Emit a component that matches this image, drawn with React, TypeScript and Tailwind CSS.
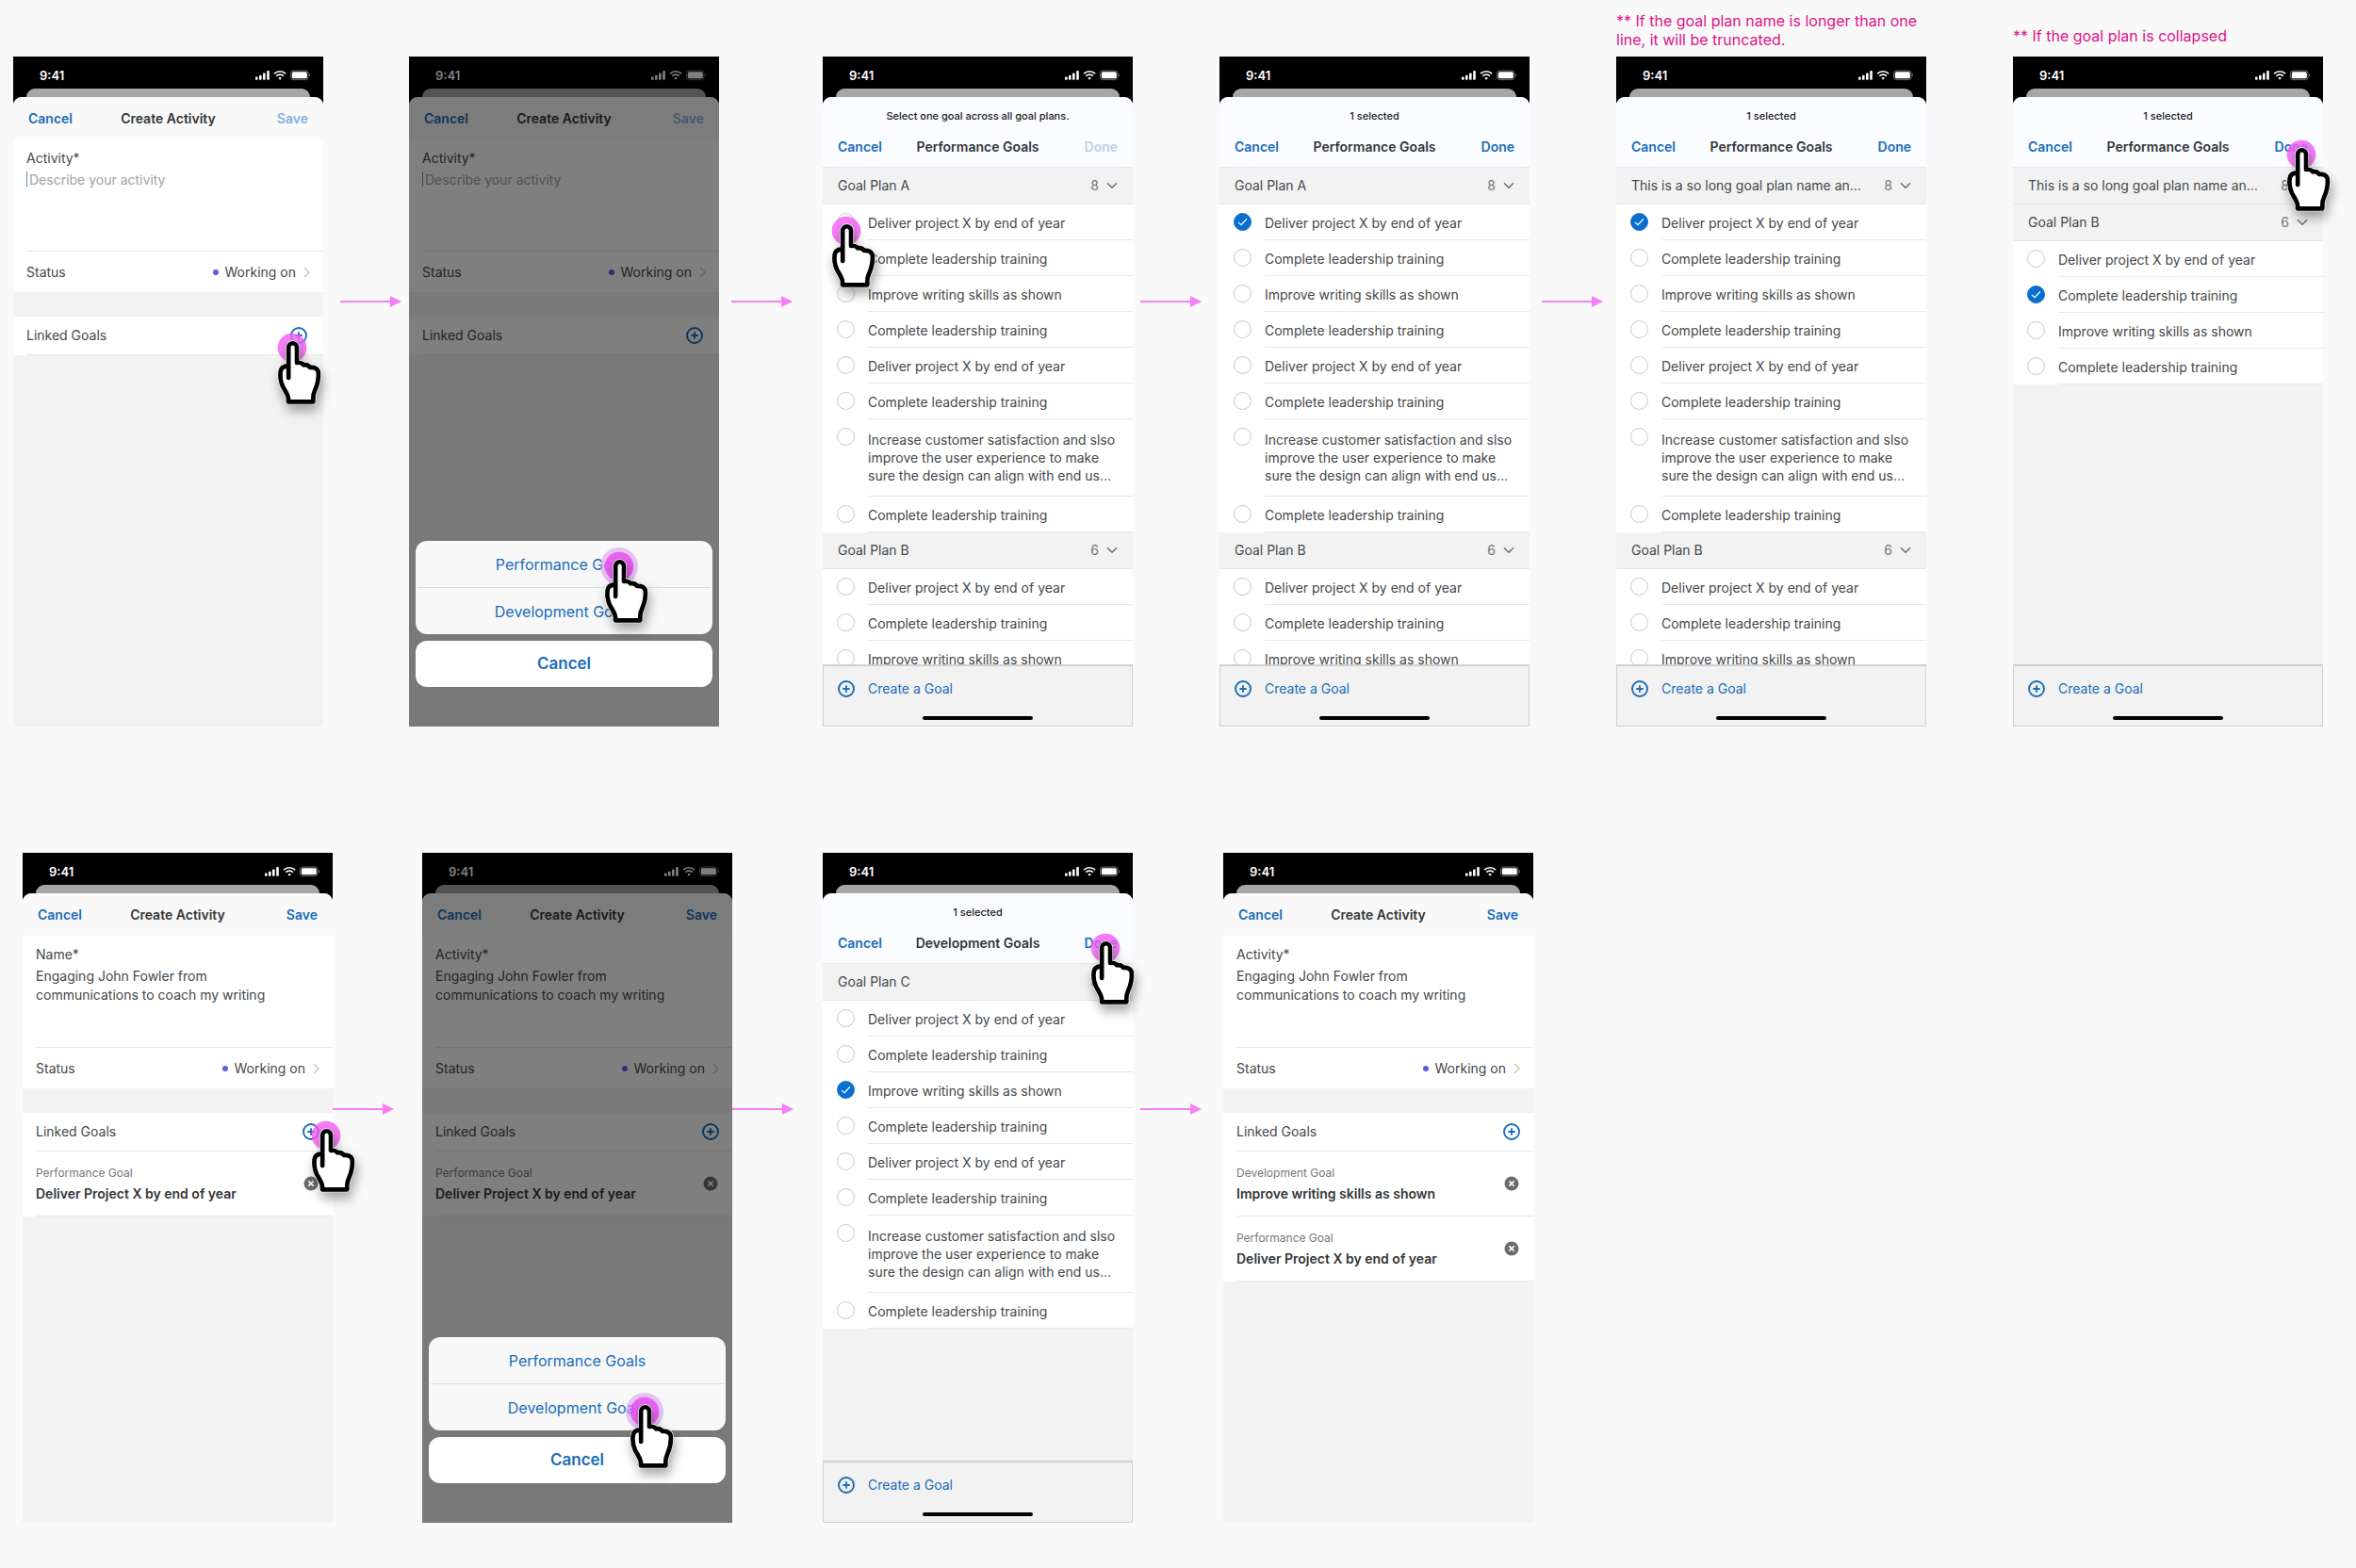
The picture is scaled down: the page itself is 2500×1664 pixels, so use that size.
import React from 'react';
import clsx from 'clsx';

const PLAN_A = [
  'Deliver project X by end of year',
  'Complete leadership training',
  'Improve writing skills as shown',
  'Complete leadership training',
  'Deliver project X by end of year',
  'Complete leadership training',
  'Increase customer satisfaction and slso improve the user experience to make sure the design can align with end us…',
  'Complete leadership training',
];
const PLAN_B = PLAN_A.slice(0, 4);
const LONG_NAME = 'This is a so long goal plan name an…';
const ACTIVITY = 'Engaging John Fowler from\ncommunications to coach my writing';

function PlusIcon() {
  return (
    <svg viewBox="0 0 18 18" className="size-[18px] shrink-0" fill="none" stroke="#1a6cb8">
      <circle cx="9" cy="9" r="8" strokeWidth="1.9" />
      <path d="M9 5.3v7.4M5.3 9h7.4" strokeWidth="1.8" />
    </svg>
  );
}

function RemoveIcon() {
  return (
    <svg viewBox="0 0 16 16" className="size-4">
      <circle cx="8" cy="8" r="7.5" fill="#6a6d70" />
      <path d="M5.4 5.4l5.2 5.2M10.6 5.4l-5.2 5.2" stroke="#fff" strokeWidth="1.5" />
    </svg>
  );
}

function StatusBar() {
  return (
    <div>
      <div className="flex h-[34px] items-center justify-between pt-[6px] pr-[14px] pl-[28px] text-white">
        <span className="text-[13px] font-semibold">9:41</span>
        <svg viewBox="0 0 58 12" className="h-3 w-[58px]" fill="#fff">
          <rect x="0" y="7.5" width="2.6" height="3.2" rx=".8" />
          <rect x="4" y="5.8" width="2.6" height="4.9" rx=".8" />
          <rect x="8" y="3.5" width="2.6" height="7.2" rx=".8" />
          <rect x="12.2" y="1" width="2.6" height="9.7" rx=".8" />
          <g fill="none" stroke="#fff" strokeWidth="1.7">
            <path d="M20.1 4.2a8.6 8.6 0 0 1 12 0" />
            <path d="M22.3 6.6a5.4 5.4 0 0 1 7.6 0" />
          </g>
          <path d="M24.3 8.7a2.7 2.7 0 0 1 3.6 0L26.1 10.7z" />
          <rect x="37.5" y="1" width="18.5" height="9.6" rx="2.6" fill="none" stroke="#6b6b6b" />
          <rect x="38.8" y="2.3" width="16" height="7" rx="1.5" />
          <path d="M57 4.3v3a1.6 1.6 0 0 0 0-3z" fill="#6b6b6b" />
        </svg>
      </div>
      <div className="mx-[14px] h-[9px] rounded-t-[9px] bg-[#a6a6a6]" />
    </div>
  );
}

/* tap marker: pink dot under a pointing hand */
function Pointer({ className, halo = false }) {
  const hand =
    'M39.5 123V26a13.3 13.3 0 0 1 26.6 0V75C74 73 84 76 88 82C96 80 104 84 108 90C118 88 133 92 134.5 106C136 130 130 148 124 161C120 170 118 178 118 186V199H39V188C38 177 28 163 21 150C14 134 12 118 14 104C15 92 25 86 36 85';
  return (
    <svg viewBox="0 -30 150 249" className={clsx('pointer-events-none absolute h-[83px] w-[50px] overflow-visible', className)}>
      {halo && <circle cx="51" cy="27" r="60" fill="#d9a0ec" fillOpacity=".6" />}
      <circle cx="51" cy="27" r="46" fill={halo ? '#ea4bf0' : '#f35cf3'} fillOpacity=".8" />
      <g strokeLinejoin="round" strokeLinecap="round" className="drop-shadow-[6px_20px_18px_rgba(0,0,0,0.35)]">
        <path d={hand} fill="#fff" stroke="#fff" strokeWidth="18" />
        <path d={hand} fill="#fff" stroke="#000" strokeWidth="14" />
      </g>
    </svg>
  );
}

function Arrow({ className = '' }) {
  return (
    <svg viewBox="0 0 65 12" className={clsx('h-3 w-[65px] overflow-visible', className)}>
      <path d="M0 6h54" stroke="#f77ff5" strokeWidth="1.8" />
      <path d="M53 0l12 6-12 6z" fill="#f77ff5" />
    </svg>
  );
}

function Phone({ children, overlay = null, pointer = null }) {
  return (
    <div className="relative">
      <div className="relative flex aspect-[329/711] flex-col overflow-hidden bg-black">
        <StatusBar />
        <div className="flex min-h-0 flex-1 flex-col overflow-hidden rounded-t-[9px] bg-[#f2f2f2]">{children}</div>
        {overlay}
      </div>
      {pointer}
    </div>
  );
}

function TitleBar({ title, action, disabled = false }) {
  return (
    <div className="grid grid-cols-[1fr_auto_1fr] items-center px-4 font-semibold">
      <button className="justify-self-start text-[#1a6cb8]">Cancel</button>
      <h2 className="text-[#32363a]">{title}</h2>
      <button
        disabled={disabled}
        className={clsx('justify-self-end text-[#1a6cb8]', action === 'Done' ? 'disabled:text-[#bcd1e8]' : 'disabled:text-[#86b1de]')}
      >
        {action}
      </button>
    </div>
  );
}

function ActivityForm({ id, label = 'Activity*', text = '', goals = [] }) {
  return (
    <>
      <div className="flex h-[45px] flex-col justify-center bg-[#f9f9f9]">
        <TitleBar title="Create Activity" action="Save" disabled={!text} />
      </div>
      <div className="bg-white pl-[14px]">
        <div className="flex h-[119px] flex-col border-b border-[#e8e8e8] pt-[10px]">
          <label htmlFor={id}>{label}</label>
          <div className="flex flex-1 pt-[3px]">
            {!text && <span className="mt-px h-4 w-px bg-[#5b93cc]" />}
            <textarea
              id={id}
              defaultValue={text}
              placeholder="Describe your activity"
              className={clsx('flex-1 resize-none overflow-hidden leading-5 outline-none placeholder:text-[#a0a2a4]', !text && 'pl-[2px]')}
            />
          </div>
        </div>
        <button className="flex h-[43px] w-full items-center pr-[14px]">
          <span>Status</span>
          <span className="mr-[6px] ml-auto size-[6px] rounded-full bg-[#5a5ee6]" />
          <span>Working on</span>
          <svg viewBox="0 0 7 12" className="ml-2 h-3 w-[7px]" fill="none" stroke="#c4c6c8" strokeWidth="1.4">
            <path d="M1 1l5 5-5 5" />
          </svg>
        </button>
      </div>
      <div className="mt-[26px] bg-white pl-[14px]">
        <div className={clsx('flex h-[41px] items-center justify-between border-b border-[#e8e8e8]', goals.length ? 'pr-[14px]' : 'pr-[17px]')}>
          <span>Linked Goals</span>
          <button aria-label="Add goal"><PlusIcon /></button>
        </div>
        {goals.map((g) => (
          <div key={g.name} className="flex h-[69px] items-center justify-between border-b border-[#e8e8e8] pr-[15px]">
            <div className="pt-[2px]">
              <div className="text-xs leading-5 text-[#74777a]">{g.kind}</div>
              <div className="leading-6 font-semibold text-[#32363a]">{g.name}</div>
            </div>
            <button aria-label="Remove goal"><RemoveIcon /></button>
          </div>
        ))}
      </div>
    </>
  );
}

function ActionSheet() {
  return (
    <div className="absolute inset-0 flex flex-col justify-end gap-[7px] bg-black/50 px-[7px] pb-[42px] text-base text-[#1a6cb8]">
      <div className="flex flex-col rounded-xl bg-[#f8f8f8] px-[2px]">
        <button className="h-[50px] border-b border-[#dcdcdc]">Performance Goals</button>
        <button className="h-[49px]">Development Goals</button>
      </div>
      <button className="h-[49px] rounded-xl bg-white text-[17px] font-semibold">Cancel</button>
    </div>
  );
}

function GoalRow({ name, group, checked }) {
  return (
    <label className="flex min-h-[38px] pl-[15px]">
      <span className="mt-[9px] grid size-[19px] shrink-0 place-items-center">
        <input
          type="radio"
          name={group}
          defaultChecked={checked}
          className="peer size-[19px] appearance-none rounded-full border border-[#c8c9cb] bg-white [grid-area:1/1] checked:border-[#0a6ed1] checked:bg-[#0a6ed1]"
        />
        <svg viewBox="0 0 12 10" className="z-10 hidden h-[9px] w-[11px] [grid-area:1/1] peer-checked:block" fill="none" stroke="#fff" strokeWidth="1.3">
          <path d="M1 5.4l3.4 3.2L11 1.4" />
        </svg>
      </span>
      <span className={clsx('ml-[14px] flex-1 border-b border-[#e8e8e8] pr-[14px] leading-[19px]', name.length > 60 ? 'py-3' : 'pt-[10px]')}>
        {name}
      </span>
    </label>
  );
}

function GoalPicker({ id, title = 'Performance Goals', hint = '1 selected', disabled = false, plans }) {
  return (
    <>
      <div className="flex h-[75px] shrink-0 flex-col justify-between border-b border-[#e4e6e9] bg-[#fafcff] pt-3 pb-[11px]">
        <p className="text-center text-[11px] leading-4 font-medium text-[#222]">{hint}</p>
        <TitleBar title={title} action="Done" disabled={disabled} />
      </div>
      <div className="min-h-0 flex-1 overflow-hidden">
        {plans.map((plan) => (
          <div key={plan.name}>
            <button className="flex h-[39px] w-full items-center border-b border-[#e4e6e9] px-4">
              <span className="flex-1 truncate text-left">{plan.name}</span>
              <span className="ml-3 text-[#74777a]">{plan.count}</span>
              <svg viewBox="0 0 12 8" className="ml-2 h-2 w-3" fill="none" stroke="#6a6d70" strokeWidth="1.5">
                <path d="M1 1.3l5 5 5-5" />
              </svg>
            </button>
            <div className="bg-white">
              {plan.goals.map((name, i) => (
                <GoalRow key={i} name={name} group={id} checked={i === plan.selected} />
              ))}
            </div>
          </div>
        ))}
      </div>
      <div className="flex h-[66px] shrink-0 flex-col items-center justify-between border border-t-2 border-[#d0d0d0] pt-[14px] pb-[6px]">
        <button className="flex w-full items-center gap-[14px] pl-[15px] text-[#1a6cb8]">
          <PlusIcon />
          Create a Goal
        </button>
        <span className="h-1 w-[117px] rounded-full bg-black" />
      </div>
    </>
  );
}

function Note({ children = null, className = '' }) {
  return (
    <div className={clsx('flex h-[60px] flex-col justify-end text-base leading-5 text-[#e0128a]', className)}>
      <p>{children}</p>
    </div>
  );
}

export default function App() {
  const planB = { name: 'Goal Plan B', count: 6, goals: PLAN_B };
  const linked = { kind: 'Performance Goal', name: 'Deliver Project X by end of year' };
  return (
    <main className="min-h-screen bg-[#f9f9f9] font-['Inter',sans-serif] text-sm text-[#45484b]">
      <section className="flex pr-[35px] pl-[14px]">
        <div className="min-w-0 flex-[329]">
          <Note />
          <Phone pointer={<Pointer className="top-[290px] left-[279px]" />}>
            <ActivityForm id="a1" />
          </Phone>
        </div>
        <div className="min-w-0 flex-[91] pt-[314px]"><Arrow className="ml-[18px]" /></div>
        <div className="min-w-0 flex-[329]">
          <Note />
          <Phone overlay={<ActionSheet />} pointer={<Pointer halo className="top-[522px] left-[206px]" />}>
            <ActivityForm id="a2" />
          </Phone>
        </div>
        <div className="min-w-0 flex-[110] pt-[314px]"><Arrow className="ml-[13px]" /></div>
        <div className="min-w-0 flex-[329]">
          <Note />
          <Phone pointer={<Pointer className="top-[166px] left-[8px]" />}>
            <GoalPicker id="g1" hint="Select one goal across all goal plans." disabled plans={[{ name: 'Goal Plan A', count: 8, goals: PLAN_A }, planB]} />
          </Phone>
        </div>
        <div className="min-w-0 flex-[92] pt-[314px]"><Arrow className="ml-2" /></div>
        <div className="min-w-0 flex-[329]">
          <Note />
          <Phone>
            <GoalPicker id="g2" plans={[{ name: 'Goal Plan A', count: 8, goals: PLAN_A, selected: 0 }, planB]} />
          </Phone>
        </div>
        <div className="min-w-0 flex-[92] pt-[314px]"><Arrow className="ml-[13px]" /></div>
        <div className="min-w-0 flex-[329]">
          <Note className="pb-2">** If the goal plan name is longer than one line, it will be truncated.</Note>
          <Phone>
            <GoalPicker id="g3" plans={[{ name: LONG_NAME, count: 8, goals: PLAN_A, selected: 0 }, planB]} />
          </Phone>
        </div>
        <div className="min-w-0 flex-[92]" />
        <div className="min-w-0 flex-[329]">
          <Note className="pb-3">** If the goal plan is collapsed</Note>
          <Phone pointer={<Pointer className="top-[85px] left-[289px]" />}>
            <GoalPicker id="g4" plans={[{ name: LONG_NAME, count: 8, goals: [] }, { ...planB, selected: 1 }]} />
          </Phone>
        </div>
      </section>

      <section className="mt-[134px] flex pl-6">
        <div className="min-w-0 flex-[329]">
          <Phone pointer={<Pointer className="top-[281px] left-[305px]" />}>
            <ActivityForm id="a3" label="Name*" text={ACTIVITY} goals={[linked]} />
          </Phone>
        </div>
        <div className="min-w-0 flex-[95] pt-[266px]"><Arrow /></div>
        <div className="min-w-0 flex-[329]">
          <Phone overlay={<ActionSheet />} pointer={<Pointer halo className="top-[574px] left-[219px]" />}>
            <ActivityForm id="a4" text={ACTIVITY} goals={[linked]} />
          </Phone>
        </div>
        <div className="min-w-0 flex-[96] pt-[266px]"><Arrow /></div>
        <div className="min-w-0 flex-[329]">
          <Phone pointer={<Pointer className="top-[82px] left-[283px]" />}>
            <GoalPicker id="g5" title="Development Goals" plans={[{ name: 'Goal Plan C', count: 8, goals: PLAN_A, selected: 2 }]} />
          </Phone>
        </div>
        <div className="min-w-0 flex-[96] pt-[266px]"><Arrow className="ml-2" /></div>
        <div className="min-w-0 flex-[329]">
          <Phone>
            <ActivityForm id="a5" text={ACTIVITY} goals={[{ kind: 'Development Goal', name: 'Improve writing skills as shown' }, linked]} />
          </Phone>
        </div>
        <div className="flex-[873]" />
      </section>
    </main>
  );
}
